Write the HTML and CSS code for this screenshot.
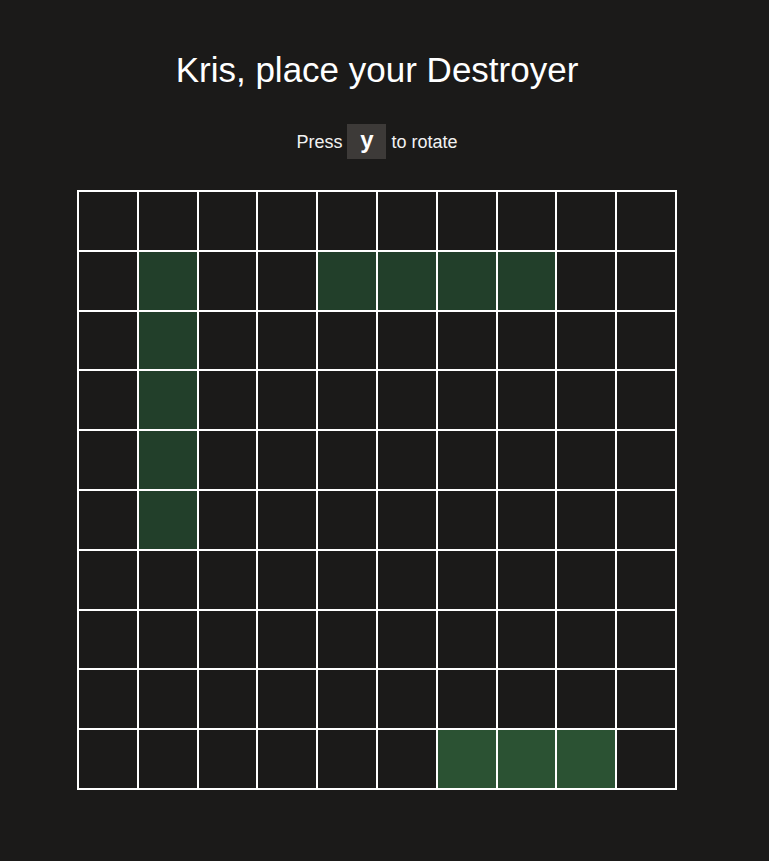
FILE: index.html
```html
<!DOCTYPE html>
<html lang="en">
<head>
<meta charset="utf-8">
<title>Place your Destroyer</title>
<link rel="stylesheet" href="styles.css">
</head>
<body>
<main class="page">
  <h1 class="title">Kris, place your Destroyer</h1>
  <p class="hint"><span>Press</span><kbd class="key">y</kbd><span>to rotate</span></p>
  <div class="board">
    <div class="cell"></div><div class="cell"></div><div class="cell"></div><div class="cell"></div><div class="cell"></div><div class="cell"></div><div class="cell"></div><div class="cell"></div><div class="cell"></div><div class="cell"></div>
    <div class="cell"></div><div class="cell ship"></div><div class="cell"></div><div class="cell"></div><div class="cell ship"></div><div class="cell ship"></div><div class="cell ship"></div><div class="cell ship"></div><div class="cell"></div><div class="cell"></div>
    <div class="cell"></div><div class="cell ship"></div><div class="cell"></div><div class="cell"></div><div class="cell"></div><div class="cell"></div><div class="cell"></div><div class="cell"></div><div class="cell"></div><div class="cell"></div>
    <div class="cell"></div><div class="cell ship"></div><div class="cell"></div><div class="cell"></div><div class="cell"></div><div class="cell"></div><div class="cell"></div><div class="cell"></div><div class="cell"></div><div class="cell"></div>
    <div class="cell"></div><div class="cell ship"></div><div class="cell"></div><div class="cell"></div><div class="cell"></div><div class="cell"></div><div class="cell"></div><div class="cell"></div><div class="cell"></div><div class="cell"></div>
    <div class="cell"></div><div class="cell ship"></div><div class="cell"></div><div class="cell"></div><div class="cell"></div><div class="cell"></div><div class="cell"></div><div class="cell"></div><div class="cell"></div><div class="cell"></div>
    <div class="cell"></div><div class="cell"></div><div class="cell"></div><div class="cell"></div><div class="cell"></div><div class="cell"></div><div class="cell"></div><div class="cell"></div><div class="cell"></div><div class="cell"></div>
    <div class="cell"></div><div class="cell"></div><div class="cell"></div><div class="cell"></div><div class="cell"></div><div class="cell"></div><div class="cell"></div><div class="cell"></div><div class="cell"></div><div class="cell"></div>
    <div class="cell"></div><div class="cell"></div><div class="cell"></div><div class="cell"></div><div class="cell"></div><div class="cell"></div><div class="cell"></div><div class="cell"></div><div class="cell"></div><div class="cell"></div>
    <div class="cell"></div><div class="cell"></div><div class="cell"></div><div class="cell"></div><div class="cell"></div><div class="cell"></div><div class="cell preview"></div><div class="cell preview"></div><div class="cell preview"></div><div class="cell"></div>
  </div>
</main>
</body>
</html>
```

FILE: styles.css
```css
html, body {
  margin: 0;
  padding: 0;
  background: #1b1a19;
  color: #ffffff;
  font-family: "Liberation Sans", Arial, sans-serif;
}

.page {
  width: 754px;
  padding-top: 49px;
  display: flex;
  flex-direction: column;
  align-items: center;
}

.title {
  margin: 0;
  font-size: 35px;
  line-height: 41px;
  font-weight: normal;
  color: #ffffff;
}

.hint {
  margin: 34px 0 0;
  display: flex;
  align-items: baseline;
  gap: 5px;
  font-size: 18px;
  color: #f2f2f2;
}

.key {
  display: block;
  width: 39px;
  height: 32px;
  padding-bottom: 3px;
  line-height: 32px;
  text-align: center;
  background: #3d3a38;
  font-family: "Liberation Sans", Arial, sans-serif;
  font-size: 24px;
  font-weight: bold;
  color: #ffffff;
}

.board {
  margin-top: 31px;
  width: 600px;
  height: 600px;
  box-sizing: border-box;
  padding: 2px;
  gap: 2px;
  background: #ffffff;
  display: grid;
  grid-template-columns: repeat(10, 1fr);
  grid-template-rows: repeat(10, 1fr);
}

.cell {
  background: #1b1a19;
}

.cell.ship {
  background: #223f2a;
}

.cell.preview {
  background: #2b5233;
}
```
